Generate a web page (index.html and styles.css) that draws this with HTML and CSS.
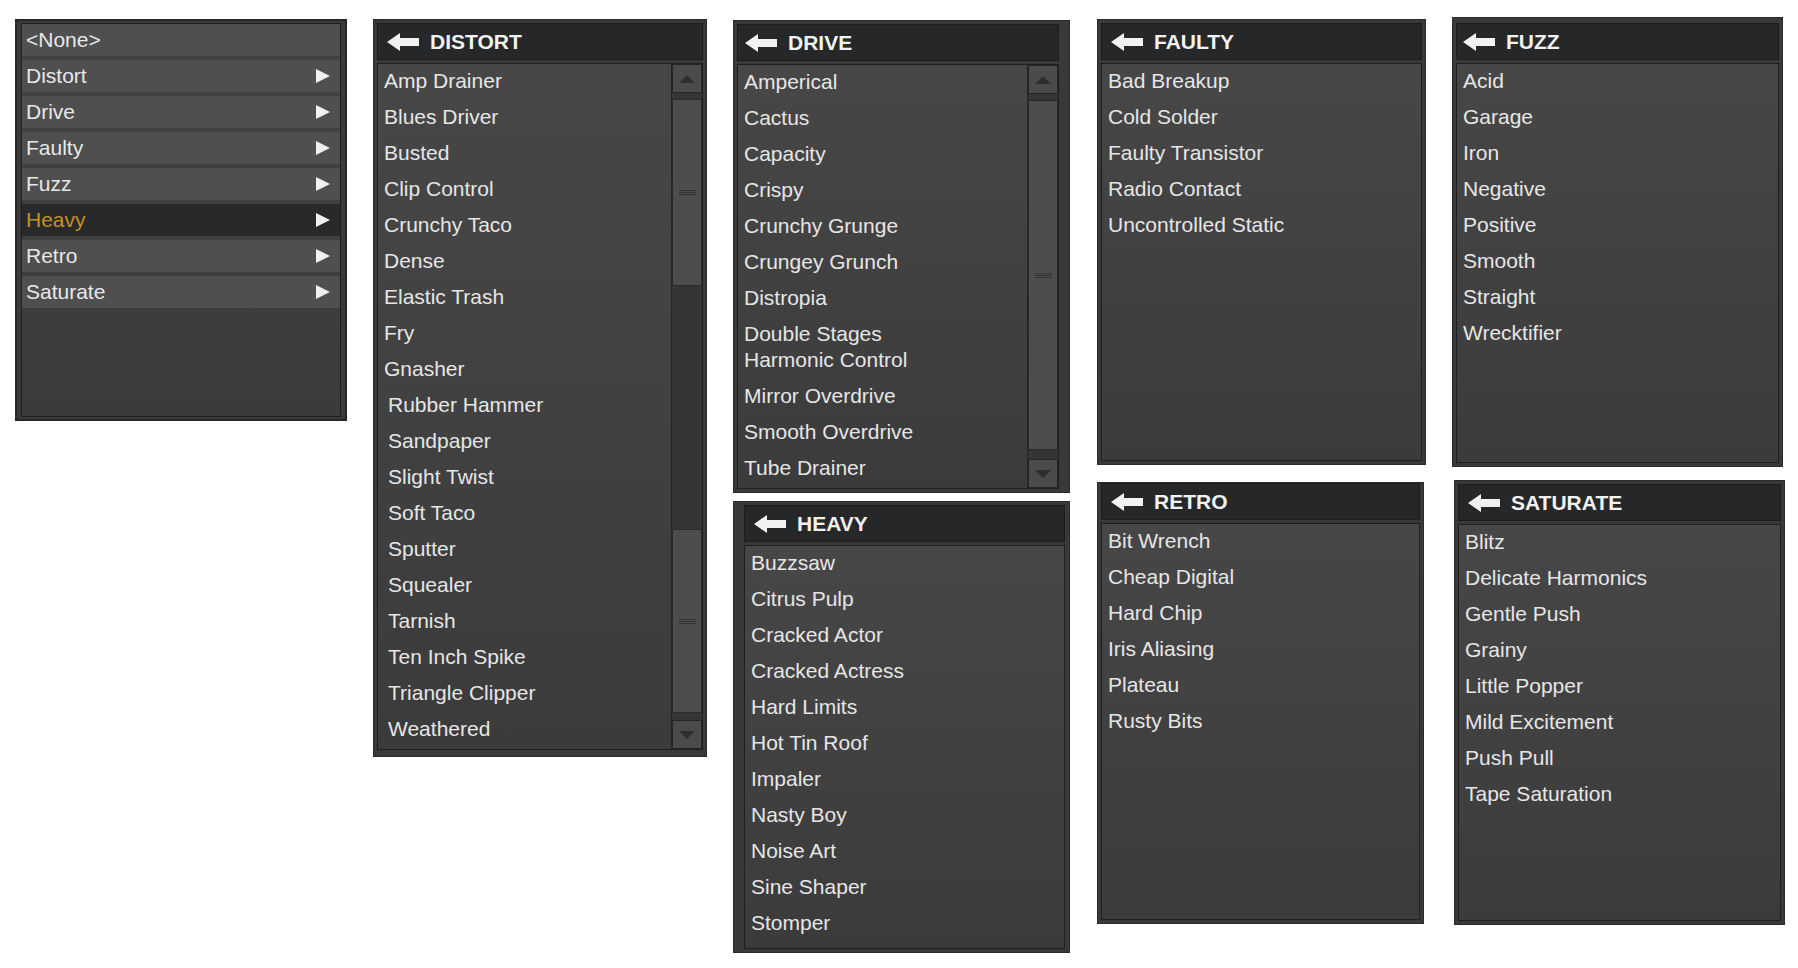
FILE: index.html
```html
<!DOCTYPE html>
<html lang="en">
<head>
<meta charset="utf-8">
<title>Effect presets</title>
<link rel="stylesheet" href="styles.css">
</head>
<body>
<div class="board">

  <div class="col col-1">
    <div class="panel root">
      <div class="root-list">
        <div class="root-row">&lt;None&gt;</div>
        <div class="root-row">Distort<span class="tri"></span></div>
        <div class="root-row">Drive<span class="tri"></span></div>
        <div class="root-row">Faulty<span class="tri"></span></div>
        <div class="root-row">Fuzz<span class="tri"></span></div>
        <div class="root-row active">Heavy<span class="tri"></span></div>
        <div class="root-row">Retro<span class="tri"></span></div>
        <div class="root-row">Saturate<span class="tri"></span></div>
      </div>
    </div>
  </div>

  <div class="col col-2">
    <div class="panel p-distort">
      <div class="title">
        <svg class="back" viewBox="0 0 32 18" width="32" height="18"><path d="M0 9 L13 0 L13 5 L32 5 L32 13 L13 13 L13 18 Z" fill="#f2f2f2"/></svg>
        <span>DISTORT</span>
      </div>
      <div class="body">
        <div class="items">
          <div class="item">Amp Drainer</div>
          <div class="item">Blues Driver</div>
          <div class="item">Busted</div>
          <div class="item">Clip Control</div>
          <div class="item">Crunchy Taco</div>
          <div class="item">Dense</div>
          <div class="item">Elastic Trash</div>
          <div class="item">Fry</div>
          <div class="item">Gnasher</div>
          <div class="item shift">Rubber Hammer</div>
          <div class="item shift">Sandpaper</div>
          <div class="item shift">Slight Twist</div>
          <div class="item shift">Soft Taco</div>
          <div class="item shift">Sputter</div>
          <div class="item shift">Squealer</div>
          <div class="item shift">Tarnish</div>
          <div class="item shift">Ten Inch Spike</div>
          <div class="item shift">Triangle Clipper</div>
          <div class="item shift">Weathered</div>
        </div>
        <div class="scroll s-distort">
          <div class="sbtn up"><span class="arr-up"></span></div>
          <div class="thumb t1"><span class="grip"></span></div>
          <div class="track"></div>
          <div class="thumb t2"><span class="grip"></span></div>
          <div class="sbtn down"><span class="arr-down"></span></div>
        </div>
      </div>
    </div>
  </div>

  <div class="col col-3">
    <div class="panel p-drive">
      <div class="title">
        <svg class="back" viewBox="0 0 32 18" width="32" height="18"><path d="M0 9 L13 0 L13 5 L32 5 L32 13 L13 13 L13 18 Z" fill="#f2f2f2"/></svg>
        <span>DRIVE</span>
      </div>
      <div class="body">
        <div class="items">
          <div class="item">Amperical</div>
          <div class="item">Cactus</div>
          <div class="item">Capacity</div>
          <div class="item">Crispy</div>
          <div class="item">Crunchy Grunge</div>
          <div class="item">Crungey Grunch</div>
          <div class="item">Distropia</div>
          <div class="item seam">Double Stages</div>
          <div class="item">Harmonic Control</div>
          <div class="item">Mirror Overdrive</div>
          <div class="item">Smooth Overdrive</div>
          <div class="item">Tube Drainer</div>
        </div>
        <div class="scroll s-drive">
          <div class="sbtn up"><span class="arr-up"></span></div>
          <div class="thumb t-full"><span class="grip"></span></div>
          <div class="sbtn down"><span class="arr-down"></span></div>
        </div>
      </div>
    </div>
    <div class="panel p-heavy">
      <div class="title">
        <svg class="back" viewBox="0 0 32 18" width="32" height="18"><path d="M0 9 L13 0 L13 5 L32 5 L32 13 L13 13 L13 18 Z" fill="#f2f2f2"/></svg>
        <span>HEAVY</span>
      </div>
      <div class="body">
        <div class="items">
          <div class="item">Buzzsaw</div>
          <div class="item">Citrus Pulp</div>
          <div class="item">Cracked Actor</div>
          <div class="item">Cracked Actress</div>
          <div class="item">Hard Limits</div>
          <div class="item">Hot Tin Roof</div>
          <div class="item">Impaler</div>
          <div class="item">Nasty Boy</div>
          <div class="item">Noise Art</div>
          <div class="item">Sine Shaper</div>
          <div class="item">Stomper</div>
        </div>
      </div>
    </div>
  </div>

  <div class="col col-4">
    <div class="panel p-faulty">
      <div class="title">
        <svg class="back" viewBox="0 0 32 18" width="32" height="18"><path d="M0 9 L13 0 L13 5 L32 5 L32 13 L13 13 L13 18 Z" fill="#f2f2f2"/></svg>
        <span>FAULTY</span>
      </div>
      <div class="body">
        <div class="items">
          <div class="item">Bad Breakup</div>
          <div class="item">Cold Solder</div>
          <div class="item">Faulty Transistor</div>
          <div class="item">Radio Contact</div>
          <div class="item">Uncontrolled Static</div>
        </div>
      </div>
    </div>
    <div class="panel p-retro">
      <div class="title">
        <svg class="back" viewBox="0 0 32 18" width="32" height="18"><path d="M0 9 L13 0 L13 5 L32 5 L32 13 L13 13 L13 18 Z" fill="#f2f2f2"/></svg>
        <span>RETRO</span>
      </div>
      <div class="body">
        <div class="items">
          <div class="item">Bit Wrench</div>
          <div class="item">Cheap Digital</div>
          <div class="item">Hard Chip</div>
          <div class="item">Iris Aliasing</div>
          <div class="item">Plateau</div>
          <div class="item">Rusty Bits</div>
        </div>
      </div>
    </div>
  </div>

  <div class="col col-5">
    <div class="panel p-fuzz">
      <div class="title">
        <svg class="back" viewBox="0 0 32 18" width="32" height="18"><path d="M0 9 L13 0 L13 5 L32 5 L32 13 L13 13 L13 18 Z" fill="#f2f2f2"/></svg>
        <span>FUZZ</span>
      </div>
      <div class="body">
        <div class="items">
          <div class="item">Acid</div>
          <div class="item">Garage</div>
          <div class="item">Iron</div>
          <div class="item">Negative</div>
          <div class="item">Positive</div>
          <div class="item">Smooth</div>
          <div class="item">Straight</div>
          <div class="item">Wrecktifier</div>
        </div>
      </div>
    </div>
    <div class="panel p-saturate">
      <div class="title">
        <svg class="back" viewBox="0 0 32 18" width="32" height="18"><path d="M0 9 L13 0 L13 5 L32 5 L32 13 L13 13 L13 18 Z" fill="#f2f2f2"/></svg>
        <span>SATURATE</span>
      </div>
      <div class="body">
        <div class="items">
          <div class="item">Blitz</div>
          <div class="item">Delicate Harmonics</div>
          <div class="item">Gentle Push</div>
          <div class="item">Grainy</div>
          <div class="item">Little Popper</div>
          <div class="item">Mild Excitement</div>
          <div class="item">Push Pull</div>
          <div class="item">Tape Saturation</div>
        </div>
      </div>
    </div>
  </div>

</div>
</body>
</html>
```

FILE: styles.css
```css
* { box-sizing: border-box; }

html, body {
  margin: 0;
  padding: 0;
  background: #ffffff;
}

body {
  width: 1798px;
  height: 968px;
  overflow: hidden;
  font-family: "Liberation Sans", Arial, sans-serif;
  font-size: 21px;
  color: #e6e6e6;
}

.board {
  display: flex;
  align-items: flex-start;
  padding: 17px 0 0 15px;
}

.col {
  display: flex;
  flex-direction: column;
}

.col-1 { width: 332px; margin-top: 2px; }
.col-2 { width: 334px; margin-top: 2px; margin-left: 26px; }
.col-3 { width: 337px; margin-top: 3px; margin-left: 26px; gap: 8px; }
.col-4 { width: 329px; margin-top: 2px; margin-left: 27px; gap: 17px; }
.col-5 { width: 333px; margin-top: 0; margin-left: 26px; gap: 13px; }

/* ---------- generic panel ---------- */
.panel {
  display: flex;
  flex-direction: column;
  gap: 3px;
  background: #393939;
  border: 1px solid #2b2b2b;
  padding: 3px;
}

.title {
  height: 37px;
  flex: none;
  display: flex;
  align-items: center;
  gap: 11px;
  padding-left: 9px;
  background: #262728;
  border: 1px solid #1c1c1c;
  font-weight: bold;
  color: #f2f2f2;
  font-size: 21px;
}

.back { flex: none; display: block; }

.body {
  flex: 1;
  display: flex;
  min-height: 0;
  background: linear-gradient(to bottom, #474747, #3b3b3b);
  border: 1px solid #1f1f1f;
}

.items {
  flex: 1;
  display: flex;
  flex-direction: column;
  padding-left: 6px;
}

.item {
  height: 36px;
  line-height: 34px;
  flex: none;
  white-space: nowrap;
}

.item.shift { padding-left: 4px; }
.item.seam { margin-bottom: -10px; }

/* ---------- scrollbar ---------- */
.scroll {
  width: 31px;
  flex: none;
  display: flex;
  flex-direction: column;
  background: #353535;
  border-left: 1px solid #242424;
}

.sbtn {
  height: 29px;
  flex: none;
  background: #4b4b4b;
  border: 1px solid #262626;
  display: flex;
  align-items: center;
  justify-content: center;
}

.arr-up {
  width: 0; height: 0;
  border-left: 8px solid transparent;
  border-right: 8px solid transparent;
  border-bottom: 8px solid #2e2e2e;
}

.arr-down {
  width: 0; height: 0;
  border-left: 8px solid transparent;
  border-right: 8px solid transparent;
  border-top: 8px solid #2e2e2e;
}

.thumb {
  background: #4d4d4d;
  border: 1px solid #2a2a2a;
  display: flex;
  align-items: center;
  justify-content: center;
}

.grip {
  width: 17px;
  height: 5px;
  border-top: 1px solid #333333;
  border-bottom: 1px solid #333333;
  position: relative;
}
.grip::after {
  content: "";
  position: absolute;
  left: 0; right: 0; top: 1px;
  height: 1px;
  background: #333333;
}

.track { flex: 1; }

.s-distort .t1 { height: 187px; margin-top: 6px; }
.s-distort .t2 { height: 184px; }
.s-distort .down { margin-top: 7px; }

.s-drive .t-full { flex: 1; margin: 6px 0 9px; }

/* ---------- per-panel geometry ---------- */
.p-distort { height: 738px; padding-bottom: 6px; }
.p-drive { height: 473px; padding-right: 10px; }
.p-drive .title { padding-left: 7px; }
.p-heavy { height: 452px; padding-left: 10px; padding-right: 4px; }
.p-faulty { height: 446px; }
.p-retro { height: 442px; width: 327px; padding-top: 0; }
.p-fuzz { height: 450px; width: 331px; padding-top: 5px; }
.p-fuzz .title { padding-left: 6px; }
.p-saturate { height: 445px; width: 331px; margin-left: 2px; }

/* ---------- root menu ---------- */
.root {
  height: 402px;
  border: 2px solid #272727;
  padding: 2px 4px 2px 4px;
  background: #3a3a3a;
}

.root-list {
  flex: 1;
  display: flex;
  flex-direction: column;
  gap: 4px;
  background: linear-gradient(to bottom, #434343, #3b3b3b);
  border: 1px solid #1f1f1f;
}

.root-row {
  height: 32px;
  flex: none;
  display: flex;
  align-items: center;
  justify-content: space-between;
  padding: 0 10px 0 4px;
  background: #4f4f4f;
  color: #e8e8e8;
}

.root-row.active {
  background: #28292a;
  color: #c3921f;
}

.tri {
  width: 0; height: 0;
  border-left: 14px solid #f0f0f0;
  border-top: 7px solid transparent;
  border-bottom: 7px solid transparent;
}
```
